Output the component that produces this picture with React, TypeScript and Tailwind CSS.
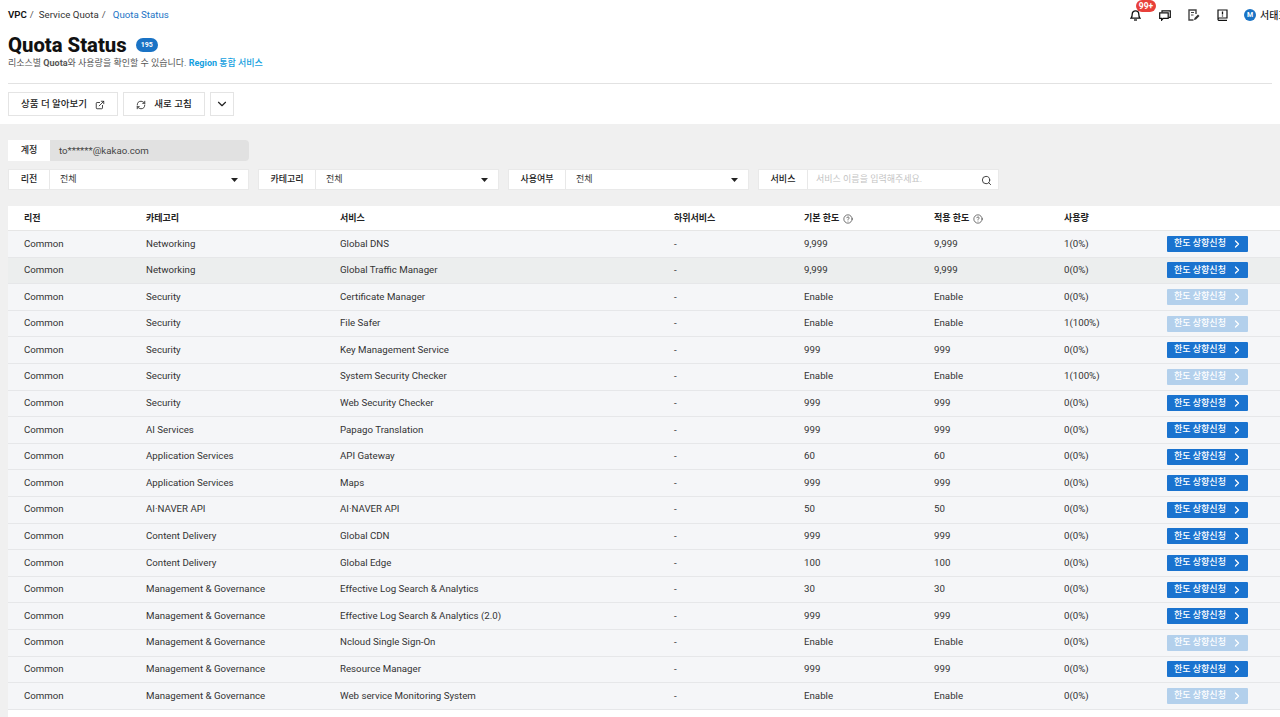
import React from "react";
import { ExternalLink, RefreshCw, ChevronDown, ChevronRight, Search, CircleHelp } from "lucide-react";

const rows: [string, string, string, string, string, boolean][] = [
  ["Networking", "Global DNS", "9,999", "9,999", "1(0%)", true],
  ["Networking", "Global Traffic Manager", "9,999", "9,999", "0(0%)", true],
  ["Security", "Certificate Manager", "Enable", "Enable", "0(0%)", false],
  ["Security", "File Safer", "Enable", "Enable", "1(100%)", false],
  ["Security", "Key Management Service", "999", "999", "0(0%)", true],
  ["Security", "System Security Checker", "Enable", "Enable", "1(100%)", false],
  ["Security", "Web Security Checker", "999", "999", "0(0%)", true],
  ["AI Services", "Papago Translation", "999", "999", "0(0%)", true],
  ["Application Services", "API Gateway", "60", "60", "0(0%)", true],
  ["Application Services", "Maps", "999", "999", "0(0%)", true],
  ["AI·NAVER API", "AI·NAVER API", "50", "50", "0(0%)", true],
  ["Content Delivery", "Global CDN", "999", "999", "0(0%)", true],
  ["Content Delivery", "Global Edge", "100", "100", "0(0%)", true],
  ["Management & Governance", "Effective Log Search & Analytics", "30", "30", "0(0%)", true],
  ["Management & Governance", "Effective Log Search & Analytics (2.0)", "999", "999", "0(0%)", true],
  ["Management & Governance", "Ncloud Single Sign-On", "Enable", "Enable", "0(0%)", false],
  ["Management & Governance", "Resource Manager", "999", "999", "0(0%)", true],
  ["Management & Governance", "Web service Monitoring System", "Enable", "Enable", "0(0%)", false],
];

function Select({ label, lw }: { label: string; lw: string }) {
  return (
    <div className="flex h-[21px] w-[241px] border border-[#e9e9e9] bg-white text-[9px]">
      <div className={`flex items-center justify-center border-r border-[#e8e8e8] pt-px font-medium text-[#222] ${lw}`}>{label}</div>
      <div className="flex flex-1 items-center justify-between pl-[10px] pr-[10px] pt-px text-[#333]">
        <span>전체</span>
        <svg width="7" height="4" viewBox="0 0 7 4"><path d="M0 0h7L3.5 4z" fill="#222" /></svg>
      </div>
    </div>
  );
}

export default function App() {
  return (
    <div className="h-[717px] w-[1280px] overflow-hidden bg-white text-[9.7px] text-[#222]" style={{ fontFamily: "Roboto, 'Noto Sans CJK KR', sans-serif" }}>
      <div className="flex h-[30px] items-center justify-between pl-2">
        <div className="flex items-center">
          <b className="font-semibold text-[#111]">VPC</b>
          <span className="ml-[3px] text-[#555]">/</span>
          <span className="ml-[5px] text-[#333]">Service Quota</span>
          <span className="ml-[3px] text-[#555]">/</span>
          <span className="ml-[7px] text-[#1a73c5]">Quota Status</span>
        </div>
        <div className="flex items-center">
          <div className="relative mr-[18px] h-3 w-[11px]">
            <svg width="11" height="12" viewBox="0 0 11 12" fill="none" stroke="#111" strokeWidth="1.3"><path d="M1 9.2c1-1 1.2-2 1.2-4 0-2 1.4-3.4 3.300-3.400s3.300 1.400 3.300 3.400c0 2 .2 3 1.200 4z" /><path d="M4 11h3" /></svg>
            <span className="absolute left-[6px] top-[-9px] flex h-[12px] w-[20px] items-center justify-center rounded-full bg-[#e8403a] text-[8.5px] font-bold leading-none text-white">99+</span>
          </div>
          <svg width="12" height="11" viewBox="0 0 12 11" fill="none" stroke="#111" strokeWidth="1.2" className="mr-[17px]"><path d="M3 2.500V.8h8.300v6.500H9.500" /><path d="M.7 2.800h8.500v5.600H4.200L2.600 10.200V8.400H.7z" fill="#fff" /></svg>
          <svg width="12" height="12" viewBox="0 0 12 12" fill="none" className="mr-[17px]"><path d="M8 5V1H1v10h4.500" stroke="#444" strokeWidth="1.4" /><path d="M3 3.500h3M3 6h2.500" stroke="#444" strokeWidth="1" /><path d="M6 11l.5-2L10 5.500l1.500 1.500L8 10.500z" fill="#333" /></svg>
          <svg width="11" height="12" viewBox="0 0 11 12" fill="none" stroke="#111" strokeWidth="1.2" className="mr-[16px]"><path d="M1 10V1h9v8H2.200A1.200 1.200 0 0 0 1 10.200v0A1.200 1.200 0 0 0 2.200 11.400H10" /><path d="M5.500 2.500v3M5.500 6.500v1" strokeWidth="1.3" /></svg>
          <span className="mr-[4px] flex h-3 w-3 shrink-0 items-center justify-center rounded-full bg-[#1a73c5] text-[7px] font-bold text-white">M</span>
          <span className="w-[20px] overflow-hidden whitespace-nowrap text-[10px] font-medium text-[#222]">서태호</span>
        </div>
      </div>

      <div className="px-2">
        <div className="mt-[3px] flex h-[24px] items-center">
          <h1 className="text-[20.3px] font-extrabold leading-none text-[#111]">Quota Status</h1>
          <span className="ml-[9px] flex h-[14px] w-[22px] items-center justify-center rounded-full bg-[#1a73c5] text-[7px] font-bold text-white">195</span>
        </div>
        <p className="text-[9px] leading-[13px] text-[#555]">
          리소스별 <b className="font-bold">Quota</b>와 사용량을 확인할 수 있습니다. <b className="font-bold text-[#14a0e0]">Region</b> <span className="font-medium text-[#14a0e0]">통합 서비스</span>
        </p>
        <div className="mt-[13px] h-px bg-[#e2e2e2]" />
        <div className="mt-2 flex h-[24px] gap-[5px] text-[9.5px]">
          <button className="flex w-[110px] items-center justify-center gap-2 border border-[#e4e4e4] bg-white pt-px font-medium text-[#222]">
            상품 더 알아보기 <ExternalLink size={10} />
          </button>
          <button className="flex w-[82px] items-center justify-center gap-2 border border-[#e4e4e4] bg-white pt-px font-medium text-[#222]">
            <RefreshCw size={10} /> 새로 고침
          </button>
          <button className="flex w-[24px] items-center justify-center border border-[#e4e4e4] bg-white">
            <ChevronDown size={14} strokeWidth={2} />
          </button>
        </div>
      </div>

      <div className="mt-2 h-[593px] bg-[#f0f0f0] pl-2 pt-4">
        <div className="flex h-[21px] w-[241px] text-[9px]">
          <div className="flex w-[42px] items-center justify-center bg-white pt-px font-medium text-[#222]">계정</div>
          <div className="flex flex-1 items-center rounded-r-sm bg-[#e1e1e1] pl-[9px] pt-px text-[9.7px] text-[#444]">to******@kakao.com</div>
        </div>
        <div className="mt-2 flex gap-[9px]">
          <Select label="리전" lw="w-[41px]" />
          <Select label="카테고리" lw="w-[57px]" />
          <Select label="사용여부" lw="w-[57px]" />
          <div className="flex h-[21px] w-[241px] border border-[#e9e9e9] bg-white text-[9px]">
            <div className="flex w-[49px] items-center justify-center border-r border-[#e8e8e8] pt-px font-medium">서비스</div>
            <div className="flex flex-1 items-center justify-between pl-2 pr-[6px] pt-px text-[#c4c4c4]">
              <span>서비스 이름을 입력해주세요.</span>
              <Search size={11} color="#333" />
            </div>
          </div>
        </div>

        <div className="mt-4 w-[1272px]">
          <div className="flex h-[25px] items-center border-b border-[#e6e6e6] bg-white pt-[2px] text-[9px] font-bold text-[#222]">
            <div className="w-[138px] pl-4">리전</div>
            <div className="w-[194px]">카테고리</div>
            <div className="w-[334px]">서비스</div>
            <div className="w-[130px]">하위서비스</div>
            <div className="flex w-[130px] items-center gap-[4px]">기본 한도 <CircleHelp size={10} strokeWidth={1.5} /></div>
            <div className="flex w-[130px] items-center gap-[4px]">적용 한도 <CircleHelp size={10} strokeWidth={1.5} /></div>
            <div className="w-[103px]">사용량</div>
          </div>
          {rows.map((r, i) => (
            <div key={i} className={`flex h-[26.6px] items-center border-b border-[#e6e7e9] text-[#333] ${i === 1 ? "bg-[#eceeee]" : "bg-[#f5f6f8]"}`}>
              <div className="w-[138px] pl-4">Common</div>
              <div className="w-[194px]">{r[0]}</div>
              <div className="w-[334px]">{r[1]}</div>
              <div className="w-[130px]">-</div>
              <div className="w-[130px]">{r[2]}</div>
              <div className="w-[130px]">{r[3]}</div>
              <div className="w-[103px]">{r[4]}</div>
              <button className={`flex h-4 w-[81px] items-center justify-between whitespace-nowrap rounded-[1px] pl-[7px] pr-[5px] text-[9px] font-medium text-white ${r[5] ? "bg-[#1a73cf]" : "bg-[#b3d0ec]"}`}>
                한도 상향신청 <ChevronRight size={12} strokeWidth={2.5} />
              </button>
            </div>
          ))}
          <div className="h-[10px] bg-white" />
        </div>
      </div>
    </div>
  );
}
